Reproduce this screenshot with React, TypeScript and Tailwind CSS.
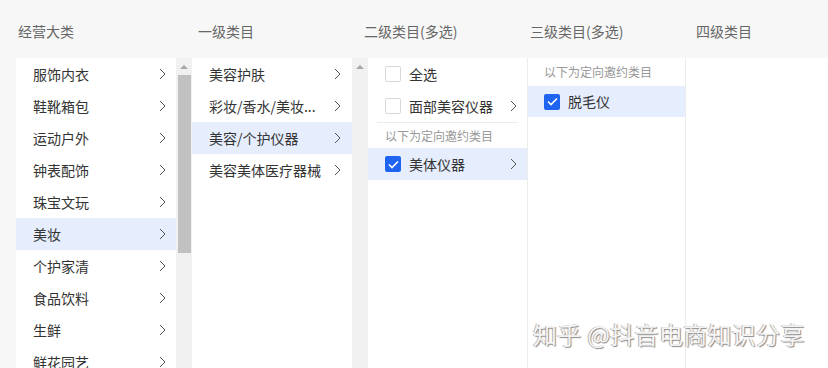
const topCats = ["服饰内衣", "鞋靴箱包", "运动户外", "钟表配饰", "珠宝文玩", "美妆", "个护家清", "食品饮料", "生鲜", "鲜花园艺"]
const firstCats = ["美容护肤", "彩妆/香水/美妆...", "美容/个护仪器", "美容美体医疗器械"]

function Chevron() {
  return (
    <svg width="7" height="12" viewBox="0 0 7 12" fill="none" className="shrink-0">
      <polyline points="1,1 6,6 1,11" stroke="#555" strokeWidth="1" />
    </svg>
  )
}

function Checkbox({ checked }: { checked?: boolean }) {
  if (checked) {
    return (
      <span className="w-[16px] h-[16px] rounded-[2px] bg-[#1f64f0] flex items-center justify-center shrink-0">
        <svg width="11" height="9" viewBox="0 0 11 9" fill="none">
          <polyline points="1,4.5 4,7.5 10,1.5" stroke="#fff" strokeWidth="1.6" />
        </svg>
      </span>
    )
  }
  return <span className="w-[16px] h-[16px] rounded-[2px] border border-[#d9d9d9] bg-white shrink-0" />
}

function Scrollbar({ thumb }: { thumb?: boolean }) {
  return (
    <div className="w-[16px] shrink-0 bg-[#f1f1f1] flex flex-col items-center">
      <div className="h-[17px] w-full flex items-center justify-center">
        <span className="w-0 h-0 border-l-[4px] border-r-[4px] border-b-[4px] border-l-transparent border-r-transparent border-b-[#a8a8a8]" />
      </div>
      {thumb && <div className="w-[13px] h-[178px] bg-[#c1c1c1]" />}
    </div>
  )
}

export default function App() {
  return (
    <div className="relative w-[828px] h-[368px] overflow-hidden bg-[#f7f7f7] text-[14px] text-[#333] font-['Noto_Sans_CJK_SC','Noto_Sans',sans-serif]">
      <div className="h-[58px] flex items-center pt-[4px] text-[#666] pl-[18px]">
        <div className="w-[180px]">经营大类</div>
        <div className="w-[166px]">一级类目</div>
        <div className="w-[166px]">二级类目(多选)</div>
        <div className="w-[166px]">三级类目(多选)</div>
        <div>四级类目</div>
      </div>

      <div className="flex pl-[16px] h-[310px]">
        <div className="w-[160px] bg-white">
          {topCats.map((c) => (
            <div
              key={c}
              className={`h-[32px] flex items-center justify-between pl-[17px] pr-[10px] ${c === "美妆" ? "bg-[#e6eefd]" : ""}`}
            >
              <span>{c}</span>
              <Chevron />
            </div>
          ))}
        </div>
        <Scrollbar thumb />

        <div className="w-[160px] bg-white">
          {firstCats.map((c) => (
            <div
              key={c}
              className={`h-[32px] flex items-center justify-between pl-[17px] pr-[11px] ${c === "美容/个护仪器" ? "bg-[#e6eefd]" : ""}`}
            >
              <span className="whitespace-nowrap">{c}</span>
              <Chevron />
            </div>
          ))}
        </div>
        <Scrollbar />

        <div className="w-[160px] bg-white border-r border-[#ececec]">
          <div className="h-[32px] flex items-center gap-[8px] pl-[17px]">
            <Checkbox />
            <span>全选</span>
          </div>
          <div className="h-[32px] flex items-center gap-[8px] pl-[17px] pr-[10px]">
            <Checkbox />
            <span className="flex-1">面部美容仪器</span>
            <Chevron />
          </div>
          <div className="mx-[9px] border-t border-[#ececec]" />
          <div className="h-[25px] flex items-center pl-[17px] text-[12px] text-[#999]">以下为定向邀约类目</div>
          <div className="h-[32px] flex items-center gap-[8px] pl-[17px] pr-[10px] bg-[#e6eefd]">
            <Checkbox checked />
            <span className="flex-1">美体仪器</span>
            <Chevron />
          </div>
        </div>

        <div className="w-[158px] bg-white border-r border-[#ececec]">
          <div className="h-[28px] flex items-center pl-[16px] text-[12px] text-[#999]">以下为定向邀约类目</div>
          <div className="h-[31px] flex items-center gap-[8px] pl-[16px] bg-[#e6eefd]">
            <Checkbox checked />
            <span>脱毛仪</span>
          </div>
        </div>

        <div className="flex-1 bg-white" />
      </div>

      <div className="absolute left-[533px] top-[319px] text-[24px] leading-[30px] tracking-[0.3px] text-[#f4f4f4] whitespace-nowrap [text-shadow:1px_1px_1px_#8a8a8a,-1px_0_0_#b5b5b5]">
        知乎 @抖音电商知识分享
      </div>
    </div>
  )
}
